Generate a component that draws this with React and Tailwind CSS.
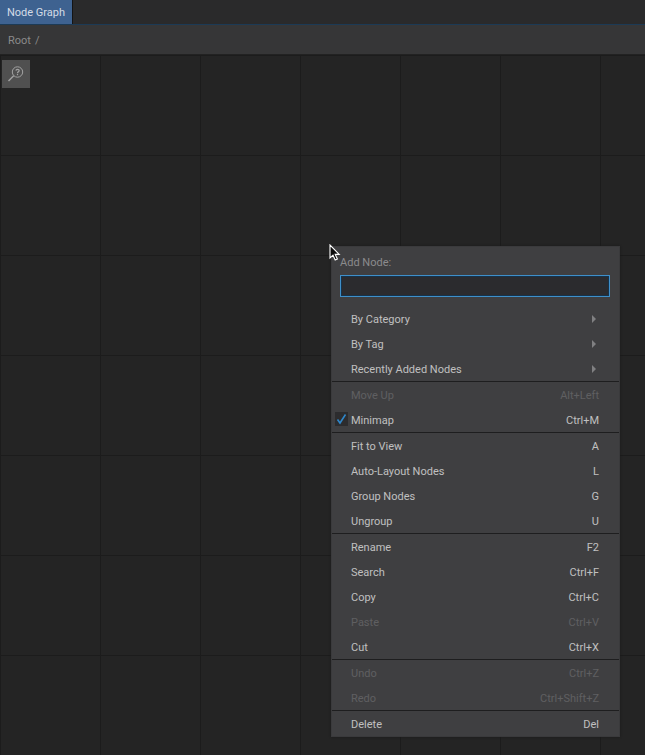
import React from 'react';

const Sep = () => <div className="h-px bg-[#1e1e1f]" />;

const Row = ({ label, shortcut, disabled, checked, arrow }) => (
  <div className={`relative flex h-[25px] items-center justify-between pl-[19px] pr-5 pt-1 text-[11px] ${disabled ? 'text-[#5f5f61]' : 'text-[#c0c0c0]'}`}>
    {checked && (
      <span className="absolute left-[3px] top-[5px] flex h-[14px] w-[13px] items-center justify-center bg-[#2c2c2e]">
        <svg width="11" height="12" viewBox="0 0 11 12" fill="none">
          <path d="M1.5 6.5 L4 10 L9.5 1.5" stroke="#2f86c8" strokeWidth="1.6" />
        </svg>
      </span>
    )}
    <span>{label}</span>
    {shortcut && <span>{shortcut}</span>}
    {arrow && <span className="mb-[3px] mr-[3px] h-0 w-0 border-y-4 border-l-[4px] border-y-transparent border-l-[#808082]" />}
  </div>
);

const ContextMenu = () => (
  <div className="absolute left-[331px] top-[246px] w-[289px] border border-[#3a3a3c] bg-[#3f3f41] font-['Roboto',sans-serif] shadow-[0_0_2px_#1a1a1a]">
    <div className="px-2 pb-[9px] pt-[9px]">
      <div className="mb-[6px] text-[11px] leading-[13px] text-[#8b8b8d]">Add Node:</div>
      <div className="h-[22px] w-[270px] border border-[#3f8fc9] bg-[#2b2b2e] shadow-[inset_0_0_0_1px_#16324a]" />
    </div>
    <Row label="By Category" arrow />
    <Row label="By Tag" arrow />
    <Row label="Recently Added Nodes" arrow />
    <Sep />
    <Row label="Move Up" shortcut="Alt+Left" disabled />
    <Row label="Minimap" shortcut="Ctrl+M" checked />
    <Sep />
    <Row label="Fit to View" shortcut="A" />
    <Row label="Auto-Layout Nodes" shortcut="L" />
    <Row label="Group Nodes" shortcut="G" />
    <Row label="Ungroup" shortcut="U" />
    <Sep />
    <Row label="Rename" shortcut="F2" />
    <Row label="Search" shortcut="Ctrl+F" />
    <Row label="Copy" shortcut="Ctrl+C" />
    <Row label="Paste" shortcut="Ctrl+V" disabled />
    <Row label="Cut" shortcut="Ctrl+X" />
    <Sep />
    <Row label="Undo" shortcut="Ctrl+Z" disabled />
    <Row label="Redo" shortcut="Ctrl+Shift+Z" disabled />
    <Sep />
    <Row label="Delete" shortcut="Del" />
  </div>
);

const App = () => (
  <div className="relative flex h-[755px] w-[645px] flex-col overflow-hidden bg-[#242424] font-['Roboto',sans-serif]">
    <div className="flex h-[25px] shrink-0 border-b border-[#1c3a55] bg-[#2a2a2b]">
      <div className="flex h-[24px] w-[72px] items-center justify-center bg-[#3e6290] pt-[2px] text-[11px] text-[#d3dbe6]">Node Graph</div>
      <div className="flex-1 border-l border-[#141414]" />
    </div>
    <div className="flex h-[30px] shrink-0 items-center gap-1 border-b border-[#222] bg-[#363637] pl-2 pt-1 text-[11px] text-[#8a8a8a]">
      <span>Root</span>
      <span>/</span>
    </div>
    <div className="relative flex-1 bg-[#242424] bg-[linear-gradient(to_right,#1c1c1c_1px,transparent_1px),linear-gradient(to_bottom,#1c1c1c_1px,transparent_1px)] bg-[size:100px_100px]">
      <div className="absolute left-[2px] top-[5px] flex h-7 w-7 items-center justify-center bg-[#505050]">
        <svg width="18" height="18" viewBox="0 0 18 18" fill="none" stroke="#a2a2a2">
          <circle cx="10.5" cy="7" r="5.2" strokeWidth="1" />
          <path d="M6.7 10.8 L1.5 16" strokeWidth="1.4" />
          <path d="M8.9 5.6 C9 3.8 12.2 3.9 12.2 5.6 C12.2 6.9 10.5 6.8 10.5 8.2" strokeWidth="1.2" />
          <path d="M10.5 9 V10.2" strokeWidth="1.2" />
        </svg>
      </div>
    </div>
    <ContextMenu />
    <svg className="absolute left-[329px] top-[244px]" width="12" height="18" viewBox="0 0 12 18">
      <path d="M1 1 V14 L4 11.2 L6.2 16 L8.4 15 L6.2 10.4 H10.2 Z" fill="#0c0c0c" stroke="#ffffff" strokeWidth="1.1" />
    </svg>
  </div>
);

export default App;
